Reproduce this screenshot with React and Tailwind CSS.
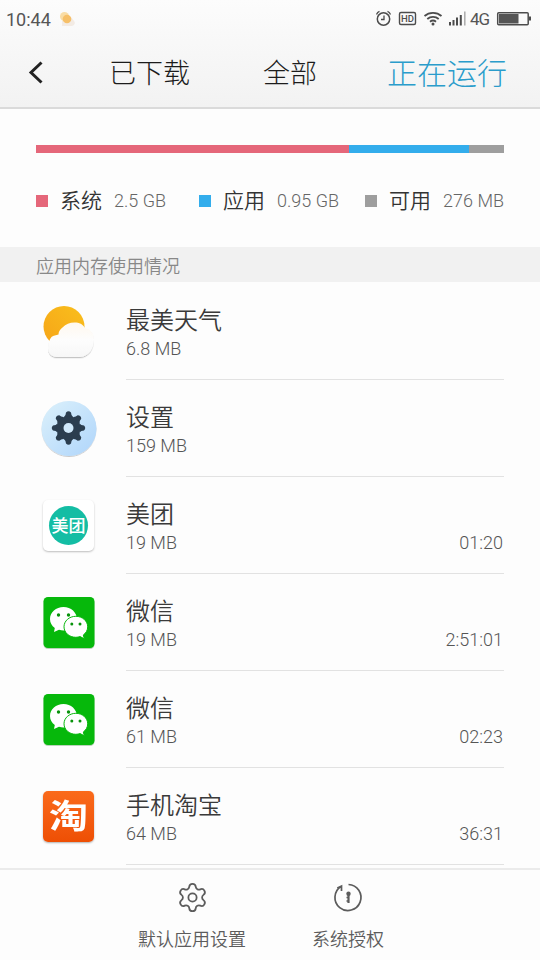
import { Settings } from "lucide-react";

const tabs = [
  { label: "已下载", className: "w-[154px] pt-[4px] text-[27px] text-[#1c1c1c]" },
  { label: "全部", className: "w-[124px] pt-[4px] text-[27px] text-[#1c1c1c]" },
  { label: "正在运行", className: "pt-[3px] text-[30px] text-[#2a9ccb]" },
];

const usage = [
  { label: "系统", value: "2.5 GB", color: "bg-[#e5677a]", width: "w-[313px]" },
  { label: "应用", value: "0.95 GB", color: "bg-[#33adec]", width: "w-[120px]" },
  { label: "可用", value: "276 MB", color: "bg-[#9e9e9e]", width: "w-[35px]" },
];

const apps = [
  { name: "最美天气", size: "6.8 MB", icon: WeatherIcon },
  { name: "设置", size: "159 MB", icon: SettingsIcon },
  { name: "美团", size: "19 MB", time: "01:20", icon: MeituanIcon },
  { name: "微信", size: "19 MB", time: "2:51:01", icon: WechatIcon },
  { name: "微信", size: "61 MB", time: "02:23", icon: WechatIcon },
  { name: "手机淘宝", size: "64 MB", time: "36:31", icon: TaobaoIcon },
];

/* ================= APP ICONS ================= */
function WeatherIcon() {
  return (
    <svg width="60" height="60" viewBox="0.5 0.5 60 60">
      <defs>
        <linearGradient id="sun" x1="0" y1="1" x2="1" y2="0">
          <stop offset="0" stopColor="#f6a418" />
          <stop offset="1" stopColor="#f9bf1c" />
        </linearGradient>
        <linearGradient id="cloud" x1="0" y1="0" x2="0" y2="1">
          <stop offset="0" stopColor="#fff8ee" />
          <stop offset="0.5" stopColor="#fdfdfd" />
          <stop offset="1" stopColor="#f7f7f7" />
        </linearGradient>
        <filter id="cloudShadow" x="-20%" y="-20%" width="140%" height="150%">
          <feDropShadow dx="0" dy="1.2" stdDeviation="0.7" floodOpacity="0.22" />
        </filter>
      </defs>
      <circle cx="25.5" cy="25" r="20.5" fill="url(#sun)" />
      <path
        d="M18 55.500c-5.500-.5-8.500-4-8.500-9.500 0-4.500 1.500-8 3.500-10.500 2-1.500 4.500-1.500 7-2.500 0-3 1.500-5 4-7C27.500 22.500 31 21 36 21c5 0 8 1.500 10.500 5.500 6 1.500 9 5.500 9 11.500 0 9-5 17-14 17.500z"
        fill="url(#cloud)"
        filter="url(#cloudShadow)"
      />
    </svg>
  );
}

function SettingsIcon() {
  const teeth = [0, 45, 90, 135, 180, 225, 270, 315];
  return (
    <svg width="60" height="60" viewBox="0 0 60 60">
      <defs>
        <linearGradient id="disc" x1="0" y1="0" x2="1" y2="1">
          <stop offset="0" stopColor="#dcf1fb" />
          <stop offset="1" stopColor="#afd5fb" />
        </linearGradient>
        <filter id="discShadow" x="-10%" y="-10%" width="120%" height="125%">
          <feDropShadow dx="0" dy="0.8" stdDeviation="0.6" floodOpacity="0.25" />
        </filter>
      </defs>
      <circle cx="30" cy="29.5" r="27.5" fill="url(#disc)" filter="url(#discShadow)" />
      <g fill="#2b3d4f" transform="translate(29.500 29)">
        {teeth.map((angle) => (
          <path key={angle} d="M-4.500-11Q-2.600-12.500-2.500-15.500Q0-18 2.500-15.500Q2.600-12.500 4.500-11z" transform={`rotate(${angle})`} />
        ))}
        <circle r="12" />
        <circle r="5" fill="#d0e8fa" />
      </g>
    </svg>
  );
}

function MeituanIcon() {
  return (
    <div className="flex h-[51px] w-[51px] items-center justify-center rounded-[5px] bg-white shadow-[0_1px_2px_rgba(0,0,0,0.25)]">
      <div className="flex h-[39px] w-[39px] items-center justify-center rounded-full bg-[#14bda4] pt-[2px] text-[17px] leading-none font-medium whitespace-nowrap text-white">
        美团
      </div>
    </div>
  );
}

function WechatIcon() {
  return (
    <svg width="52" height="54" viewBox="0 0 52 54">
      <rect x="0.5" y="2" width="51" height="51" rx="4.5" fill="#8fb58f" opacity="0.6" />
      <rect x="0.5" y="1" width="51" height="51" rx="4.5" fill="#06b80b" />
      <path
        d="M20.500 11C13 11 7 16.300 7 23c0 3.700 1.800 6.800 4.800 9L11 36l5-2.300c1.500.5 3 .7 4.500.7 7.500 0 13.500-5 13.500-11.400S28 11 20.500 11z"
        fill="#fff"
      />
      <path
        d="M32.800 20.300c-6.600 0-11.800 4.700-11.800 10.500s5.200 10.500 11.800 10.500c1.600 0 3-.3 4.300-.7l4.200 2.200-1-3.800c2.700-1.900 4.400-4.900 4.400-8.200 0-5.800-5.300-10.500-11.900-10.500z"
        fill="#fff"
        stroke="#06b80b"
        strokeWidth="1"
      />
      <g fill="#08930c">
        <circle cx="15.500" cy="19" r="1.700" />
        <circle cx="25.500" cy="19" r="1.700" />
        <circle cx="28.800" cy="28" r="1.500" />
        <circle cx="37" cy="28" r="1.500" />
      </g>
    </svg>
  );
}

function TaobaoIcon() {
  return (
    <div className="flex h-[51px] w-[51px] items-center justify-center rounded-[5px] bg-linear-to-b from-[#fa6a1b] to-[#ee4f04] text-[39px] leading-none font-bold text-white shadow-[0_1px_2px_rgba(0,0,0,0.3)]">
      <span className="mt-[2px] scale-y-[0.84]">淘</span>
    </div>
  );
}

/* ================= STATUS BAR ================= */
function StatusBar() {
  return (
    <div className="flex h-[38px] items-center justify-between pl-1.5 text-[#555]">
      <div className="flex items-center gap-2">
        <span className="pt-px text-[18px] leading-none">10:44</span>
        <svg width="16" height="16" viewBox="0 0 16 16">
          <path d="M3 15h10a3 3 0 0 0 2-5L12 6 3 10z" fill="#f3ebe4" />
          <circle cx="5.500" cy="5.500" r="4.500" fill="#f9dda6" />
          <circle cx="8" cy="8" r="4.300" fill="#f6c069" />
        </svg>
      </div>
      <svg width="164" height="24" viewBox="376 7 164 24" fill="none" stroke="#4c4c4c">
        {/* alarm */}
        <circle cx="383.500" cy="19" r="6.200" strokeWidth="1.500" />
        <path d="M384 15.500v4h-3M376.500 14.500c.5-1.500 1.500-2.600 3-3.200M387.500 11.300c1.500.6 2.500 1.700 3 3.200" strokeWidth="1.300" />
        {/* hd */}
        <rect x="399.500" y="12.500" width="16" height="12" rx="1.500" strokeWidth="1.400" />
        <text x="407.500" y="22" textAnchor="middle" fontSize="9.500" fontWeight="500" fill="#4c4c4c" stroke="none">HD</text>
        {/* wifi */}
        <path d="M424.500 16c4.800-4.300 12.200-4.300 17 0M427.300 19c3.200-2.800 8.200-2.800 11.400 0M430 21.800c1.800-1.500 4.200-1.500 6 0" strokeWidth="1.800" />
        <circle cx="433" cy="24" r="1.500" fill="#4c4c4c" stroke="none" />
        {/* signal */}
        <path d="M450 22v3.500M453.500 20v5.500M457 17.500v8M460.800 15v10.500" strokeWidth="2" />
        <path d="M464.800 11.500v14" strokeWidth="1.500" stroke="#aaa" />
        <text x="470" y="24.500" fontSize="17" textLength="20" fill="#555" stroke="none">4G</text>
        {/* battery */}
        <rect x="497.700" y="12.700" width="30.500" height="12" rx="1" strokeWidth="1.500" />
        <path d="M499 14h19.500v9.500H499z" fill="#555" stroke="none" />
        <path d="M530 16.500v4" strokeWidth="2" />
      </svg>
    </div>
  );
}

export default function App() {
  return (
    <div className="flex h-[960px] w-[540px] flex-col overflow-hidden bg-[#fdfdfd] font-[Roboto,'Noto_Sans_CJK_SC',sans-serif]">
      <header className="h-[109px] shrink-0 border-b-2 border-[#dadada] bg-linear-to-b from-[#fcfcfc] to-[#f2f2f2]">
        <StatusBar />
        <nav className="flex h-[69px] items-center pl-[28px]">
          <svg width="16" height="24" viewBox="0 0 16 24" fill="none" stroke="#222" strokeWidth="3" className="mr-[65px] shrink-0">
            <path d="M13.500 1.500 3 11.500l10.500 10" />
          </svg>
          {tabs.map((tab) => (
            <button key={tab.label} className={`shrink-0 text-left leading-none font-light ${tab.className}`}>
              {tab.label}
            </button>
          ))}
        </nav>
      </header>

      {/* ===== MEMORY SUMMARY ===== */}
      <section className="h-[138px] shrink-0 px-9 pt-9">
        <div className="flex h-2">
          {usage.map((item) => (
            <div key={item.label} className={`${item.color} ${item.width}`} />
          ))}
        </div>
        <div className="mt-[33px] flex h-[30px] items-center">
          {usage.map((item) => (
            <div key={item.label} className="mr-[33px] flex shrink-0 items-center gap-3 leading-none last:mr-0 last:ml-auto nth-2:mr-0">
              <span className={`mb-px h-3 w-3 ${item.color}`} />
              <span className="text-[21px] font-[350] text-[#333]">{item.label}</span>
              <span className="text-[18px] font-light text-[#666]">{item.value}</span>
            </div>
          ))}
        </div>
      </section>

      <h2 className="flex h-[35px] shrink-0 items-center bg-[#f1f1f1] px-9 pt-[3px] text-[18px] font-[350] text-[#888]">
        应用内存使用情况
      </h2>

      {/* ===== RUNNING APPS ===== */}
      <ul className="h-[586px] shrink-0 pt-px">
        {apps.map(({ name, size, time, icon: Icon }, i) => (
          <li key={i} className="flex h-[97px] pr-9">
            <div className="flex w-[126px] shrink-0 items-center justify-center pl-[11px]">
              <Icon />
            </div>
            <div className="flex flex-1 items-end justify-between border-b border-[#e2e2e2] pb-[20px]">
              <div className="flex flex-col gap-[5px]">
                <span className="text-[24px] leading-[26px] font-[350] text-[#3a3a3a]">{name}</span>
                <span className="text-[18px] leading-[20px] font-light text-[#555]">{size}</span>
              </div>
              <span className="pr-px text-[18px] leading-[20px] font-light text-[#555]">{time}</span>
            </div>
          </li>
        ))}
      </ul>

      {/* ===== BOTTOM ACTIONS ===== */}
      <footer className="flex h-[92px] shrink-0 justify-center gap-[66px] border-t-2 border-[#ebebeb] pt-[12px] pr-[18px] text-[#5c5c5c]">
        <button className="flex flex-col items-center gap-[17px]">
          <Settings size={33} strokeWidth={1.3} className="-my-px" />
          <span className="text-[18px] leading-[20px] font-[350]">默认应用设置</span>
        </button>
        <button className="flex flex-col items-center gap-[17px]">
          <svg width="31" height="31" viewBox="0.5 0 31 31" fill="none" stroke="currentColor" strokeWidth="1.700">
            <path d="M16 2.500A13 13 0 1 1 8.500 4.500M4.800 6l4.200-2v5" />
            <circle cx="16" cy="11.700" r="2.200" fill="currentColor" stroke="none" />
            <path d="M16 12v9" strokeWidth="2.200" />
            <path d="M14 15.500h2M14 19h2" strokeWidth="1.300" />
          </svg>
          <span className="text-[18px] leading-[20px] font-[350]">系统授权</span>
        </button>
      </footer>
    </div>
  );
}
